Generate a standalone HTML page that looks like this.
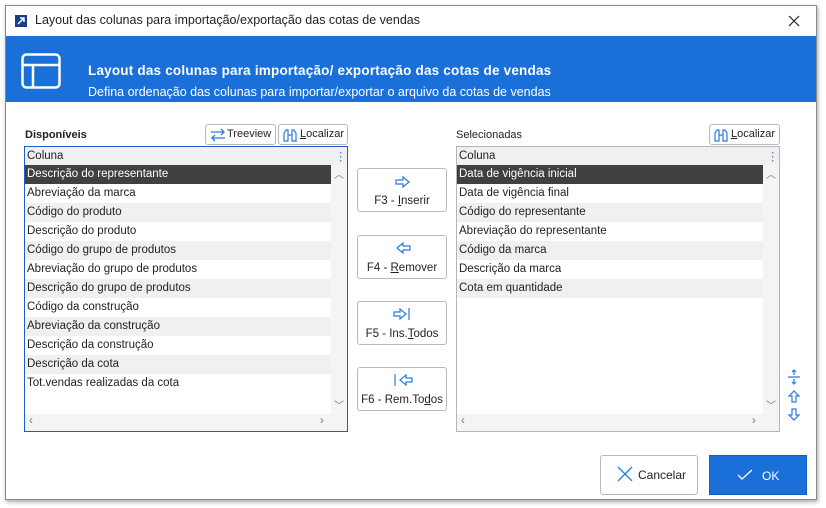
<!DOCTYPE html><html><head><meta charset="utf-8"><style>
*{box-sizing:border-box;margin:0;padding:0}
body{width:826px;height:508px;background:#fff;font-family:"Liberation Sans",sans-serif;font-size:11.5px;color:#222;position:relative;overflow:hidden}
.win{position:absolute;left:5px;top:5px;width:812px;height:495px;border:1px solid #8a8a8a;background:#fff;box-shadow:1px 2px 4px rgba(0,0,0,.35)}
.a{position:absolute}
.hdr{left:0;top:30px;width:810px;height:66px;background:#1a6fd9;color:#fff}
.list{border:1px solid #b5b5b5;background:#fff;overflow:hidden}
.list.f{border-color:#1a5fc8}
.row{position:absolute;left:0;height:19px;line-height:18px;padding-left:2px;width:306px;white-space:nowrap}
.alt{background:#f0f0f0}
.sel{background:#404040;color:#fff}
.btn{position:absolute;border:1px solid #b9b9b9;border-radius:3px;background:#fff;text-align:center}
.sm{position:absolute;border:1px solid #b9b9b9;border-radius:3px;background:#fff;height:21px;line-height:19px;font-size:11px;white-space:nowrap}
</style></head><body>
<div class="win">
 <div class="a" style="left:9px;top:9px;width:12px;height:12px;background:#1a3f8a"></div>
 <svg class="a" style="left:9px;top:9px" width="12" height="12"><path d="M3 9L9 3M5 3h4v4" stroke="#fff" stroke-width="1.5" fill="none"/></svg>
 <div class="a" style="left:29px;top:7px;font-size:12.5px;">Layout das colunas para importação/exportação das cotas de vendas</div>
 <svg class="a" style="left:782px;top:9px" width="12" height="12"><path d="M1 1L11 11M11 1L1 11" stroke="#222" stroke-width="1.2"/></svg>
 <div class="a hdr">
  <svg class="a" style="left:15px;top:17px" width="40" height="36"><rect x="1.5" y="1.5" width="37" height="33" rx="4" fill="none" stroke="#fff" stroke-width="2.5"/><path d="M2 12H38M12 12V34" stroke="#fff" stroke-width="2.5"/></svg>
  <div class="a" style="left:82px;top:27px;font-size:13.5px;font-weight:bold;letter-spacing:.2px">Layout das colunas para importação/ exportação das cotas de vendas</div>
  <div class="a" style="left:82px;top:49px;font-size:12.5px;">Defina ordenação das colunas para importar/exportar o arquivo da cotas de vendas</div>
 </div>
 <div class="a" style="left:19px;top:123px;font-weight:bold;font-size:11px">Disponíveis</div>
 <div class="sm" style="left:199px;top:118px;width:71px;padding-left:21px">Treeview</div>
 <svg class="a" style="left:203px;top:122px" width="18" height="14"><path d="M2 4H15M12 1l3 3-3 3M16 10H3M6 7l-3 3 3 3" stroke="#2a7ae0" fill="none" stroke-width="1.3"/></svg>
 <div class="sm" style="left:272px;top:118px;width:70px;padding-left:21px"><u>L</u>ocalizar</div>
 <svg class="a" style="left:276px;top:122px" width="18" height="14"><path d="M2 13V5l2-3h2v11zM10 13V2h2l2 3v8zM6 7h4" stroke="#2a7ae0" fill="none" stroke-width="1.2"/></svg>
 <div class="a" style="left:450px;top:123px;font-size:11px">Selecionadas</div>
 <div class="sm" style="left:703px;top:118px;width:71px;padding-left:21px"><u>L</u>ocalizar</div>
 <svg class="a" style="left:707px;top:122px" width="18" height="14"><path d="M2 13V5l2-3h2v11zM10 13V2h2l2 3v8zM6 7h4" stroke="#2a7ae0" fill="none" stroke-width="1.2"/></svg>

 <div class="a list f" style="left:18px;top:140px;width:324px;height:286px">
  <div class="row alt" style="top:0;width:322px;border-bottom:1px solid #ddd">Coluna</div>
  <div class="a" style="left:310px;top:2px;color:#3a7ad8">⋮</div>
  <div class="row sel" style="top:18px">Descrição do representante</div>
  <div class="row" style="top:37px">Abreviação da marca</div>
  <div class="row alt" style="top:56px">Código do produto</div>
  <div class="row" style="top:75px">Descrição do produto</div>
  <div class="row alt" style="top:94px">Código do grupo de produtos</div>
  <div class="row" style="top:113px">Abreviação do grupo de produtos</div>
  <div class="row alt" style="top:132px">Descrição do grupo de produtos</div>
  <div class="row" style="top:151px">Código da construção</div>
  <div class="row alt" style="top:170px">Abreviação da construção</div>
  <div class="row" style="top:189px">Descrição da construção</div>
  <div class="row alt" style="top:208px">Descrição da cota</div>
  <div class="row" style="top:227px">Tot.vendas realizadas da cota</div>
  <div class="a" style="left:306px;top:18px;width:16px;height:249px;background:#f4f4f4"></div>
  <div class="a" style="left:0;top:267px;width:322px;height:17px;background:#f4f4f4"></div>
  <div class="a" style="left:309px;top:19px;color:#777;font-size:10px">︿</div>
  <div class="a" style="left:309px;top:250px;color:#777;font-size:10px">﹀</div>
  <div class="a" style="left:4px;top:268px;color:#777">‹</div>
  <div class="a" style="left:295px;top:268px;color:#777">›</div>
 </div>

 <div class="a list" style="left:450px;top:140px;width:324px;height:286px">
  <div class="row alt" style="top:0;width:322px;border-bottom:1px solid #ddd">Coluna</div>
  <div class="a" style="left:310px;top:2px;color:#3a7ad8">⋮</div>
  <div class="row sel" style="top:18px">Data de vigência inicial</div>
  <div class="row" style="top:37px">Data de vigência final</div>
  <div class="row alt" style="top:56px">Código do representante</div>
  <div class="row" style="top:75px">Abreviação do representante</div>
  <div class="row alt" style="top:94px">Código da marca</div>
  <div class="row" style="top:113px">Descrição da marca</div>
  <div class="row alt" style="top:132px">Cota em quantidade</div>
  <div class="a" style="left:306px;top:18px;width:16px;height:249px;background:#f4f4f4"></div>
  <div class="a" style="left:0;top:267px;width:322px;height:17px;background:#f4f4f4"></div>
  <div class="a" style="left:309px;top:19px;color:#777;font-size:10px">︿</div>
  <div class="a" style="left:309px;top:250px;color:#777;font-size:10px">﹀</div>
  <div class="a" style="left:4px;top:268px;color:#777">‹</div>
  <div class="a" style="left:295px;top:268px;color:#777">›</div>
 </div>

 <div class="btn" style="left:351px;top:162px;width:90px;height:44px;padding-top:26px">F3 - <u>I</u>nserir</div>
 <svg class="a" style="left:389px;top:170px" width="16" height="12"><path d="M1 4h7V1l6 5-6 5V8H1z" fill="none" stroke="#2a7ae0" stroke-width="1.2"/></svg>
 <div class="btn" style="left:351px;top:229px;width:90px;height:44px;padding-top:26px">F4 - <u>R</u>emover</div>
 <svg class="a" style="left:389px;top:236px" width="16" height="12"><path d="M15 4H8V1L2 6l6 5V8h7z" fill="none" stroke="#2a7ae0" stroke-width="1.2"/></svg>
 <div class="btn" style="left:351px;top:295px;width:90px;height:44px;padding-top:26px">F5 - Ins.<u>T</u>odos</div>
 <svg class="a" style="left:387px;top:302px" width="20" height="12"><path d="M1 4h6V1l6 5-6 5V8H1z" fill="none" stroke="#2a7ae0" stroke-width="1.2"/><path d="M16 0v12" stroke="#2a7ae0" stroke-width="1.2"/></svg>
 <div class="btn" style="left:351px;top:361px;width:90px;height:44px;padding-top:26px">F6 - Rem.To<u>d</u>os</div>
 <svg class="a" style="left:387px;top:368px" width="20" height="12"><path d="M2 0v12" stroke="#2a7ae0" stroke-width="1.2"/><path d="M19 4h-6V1L7 6l6 5V8h6z" fill="none" stroke="#2a7ae0" stroke-width="1.2"/></svg>

 <svg class="a" style="left:780px;top:363px" width="16" height="60"><path d="M2 8h12M8 1v5M6 3l2-2 2 2M8 10v5M6 13l2 2 2-2" stroke="#2a7ae0" fill="none" stroke-width="1.2"/><path d="M8 22l-5 5h3v6h4v-6h3z" fill="none" stroke="#2a7ae0" stroke-width="1.2"/><path d="M6 40v6H3l5 5 5-5h-3v-6z" fill="none" stroke="#2a7ae0" stroke-width="1.2"/></svg>

 <div class="btn" style="left:594px;top:449px;width:98px;height:40px;line-height:38px;padding-left:26px;font-size:12px">Cancelar</div>
 <svg class="a" style="left:611px;top:460px" width="16" height="16"><path d="M1 1L15 15M15 1L1 15" stroke="#2a7ae0" stroke-width="1.3"/></svg>
 <div class="a" style="left:703px;top:449px;width:98px;height:40px;background:#1a6fd9;color:#fff;line-height:40px;padding-left:52px;font-size:12px;border:1px solid #1460c0">OK</div>
 <svg class="a" style="left:731px;top:463px" width="16" height="12"><path d="M1 6l4 4 10-9" stroke="#fff" fill="none" stroke-width="1.3"/></svg>
</div>
</body></html>
